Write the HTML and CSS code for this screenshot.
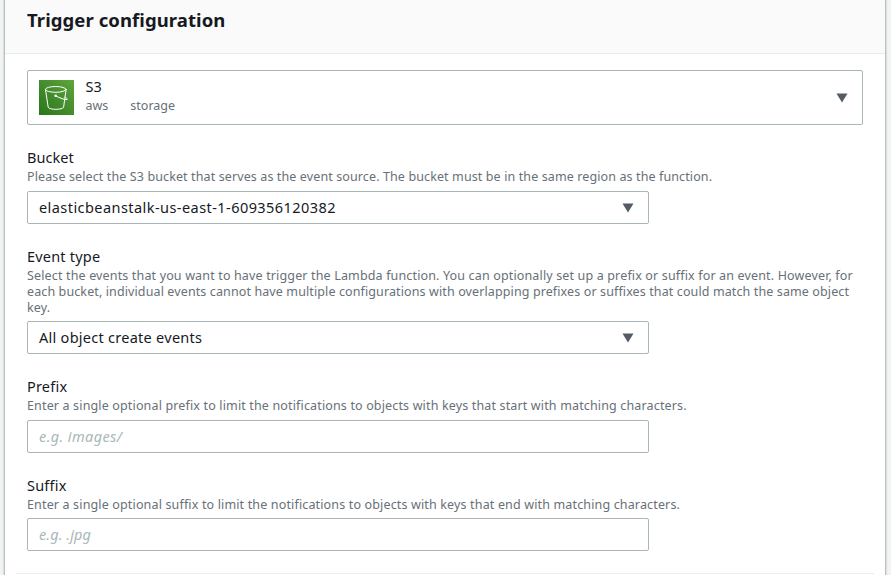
FILE: index.html
```html
<!DOCTYPE html>
<html lang="en">
<head>
<meta charset="utf-8">
<title>Trigger configuration</title>
<link rel="stylesheet" href="styles.css">
</head>
<body>
<main class="panel">
  <header class="panel-header"><h2>Trigger configuration</h2></header>
  <div class="panel-body">
    <div class="source">
      <svg class="source-icon" viewBox="0 0 35 35">
        <defs><linearGradient id="g" x1="0" y1="1" x2="1" y2="0"><stop offset="0" stop-color="#2a751d"/><stop offset="1" stop-color="#5fa53c"/></linearGradient></defs>
        <rect width="35" height="35" fill="url(#g)"/>
        <g fill="none" stroke="#fff" stroke-width="1" stroke-linejoin="round" stroke-linecap="round">
          <ellipse cx="16.8" cy="9.4" rx="10.3" ry="2.9"/>
          <path d="M6.5 9.6 9.2 27.2C9.8 30 24 30 24.6 27.2L27.1 9.6"/>
          <path d="M16.8 15.9C21 18.1 25.5 19.8 28 19.6C29 19.2 27.6 18 26 17.3"/>
        </g>
        <circle cx="16.7" cy="15.8" r="1.3" fill="#fff"/>
      </svg>
      <div class="source-text">
        <div class="source-name">S3</div>
        <div class="tags"><span>aws</span><span>storage</span></div>
      </div>
      <svg class="caret" viewBox="0 0 12 10"><path d="M.5.5h11L6 9.5z"/></svg>
    </div>

    <section class="field">
      <div class="label bucket-label">Bucket</div>
      <div class="help"><span class="bucket-help">Please select the S3 bucket that serves as the event source. The bucket must be in the same region as the function.</span></div>
      <div class="control"><span class="bucket-value">elasticbeanstalk-us-east-1-609356120382</span><svg class="caret" viewBox="0 0 12 10"><path d="M.5.5h11L6 9.5z"/></svg></div>
    </section>

    <section class="field event">
      <div class="label">Event type</div>
      <div class="help"><span class="event-help-1">Select the events that you want to have trigger the Lambda function. You can optionally set up a prefix or suffix for an event. However, for</span> <span class="event-help-2">each bucket, individual events cannot have multiple configurations with overlapping prefixes or suffixes that could match the same object</span> <span>key.</span></div>
      <div class="control"><span>All object create events</span><svg class="caret" viewBox="0 0 12 10"><path d="M.5.5h11L6 9.5z"/></svg></div>
    </section>

    <section class="field">
      <div class="label">Prefix</div>
      <div class="help"><span>Enter a single optional prefix to limit the notifications to objects with keys that start with matching characters.</span></div>
      <div class="control placeholder"><span class="prefix-value">e.g. images/</span></div>
    </section>

    <section class="field suffix">
      <div class="label">Suffix</div>
      <div class="help"><span>Enter a single optional suffix to limit the notifications to objects with keys that end with matching characters.</span></div>
      <div class="control placeholder"><span class="suffix-value">e.g. .jpg</span></div>
    </section>
  </div>
  <hr class="divider">
</main>
</body>
</html>
```
FILE: styles.css
```css
* { box-sizing: border-box; }
body {
  margin: 0;
  height: 575px;
  overflow: hidden;
  padding: 0 5px 0 4px;
  background: #f2f3f3;
  color: #16191f;
  font-family: "Noto Sans", "Open Sans", sans-serif;
  font-size: 14px;
}
.panel {
  height: 575px;
  background: #fff;
  border-left: 1px solid #b9c0c1;
  border-right: 1px solid #b9c0c1;
  box-shadow: 0 0 2px rgba(0, 28, 36, .25);
}
.panel-header {
  height: 54px;
  padding: 6px 22px 0;
  background: #fafafa;
  border-bottom: 1px solid #eaeded;
}
h2 { margin: 0; font-size: 18.5px; line-height: 28px; font-weight: 700; letter-spacing: .08px; }
.panel-body { padding: 16px 22px 0; }
.source {
  display: flex;
  align-items: center;
  height: 55px;
  padding: 0 14px 0 11px;
  border: 1px solid #aab7b8;
  border-radius: 2px;
}
.source-icon { width: 35px; height: 35px; flex: none; }
.source-text { flex: 1; margin-left: 11.5px; }
.source-name { font-size: 14.5px; line-height: 17px; margin-top: -3px; padding-bottom: 2px; }
.tags { display: flex; gap: 22px; font-size: 12.5px; line-height: 18px; color: #687078; }
.caret { width: 12px; height: 10px; flex: none; fill: #545b64; }
.field { margin-top: 23px; }
.label { padding-bottom: 2px; font-size: 14.5px; line-height: 18px; letter-spacing: .2px; }
.bucket-label { letter-spacing: .05px; }
.help {
  padding-top: 1px;
  margin-bottom: -1px;
  font-size: 12.5px;
  line-height: 16px;
  letter-spacing: .15px;
  color: #687078;
  white-space: nowrap;
}
.help span { display: block; }
.bucket-help, .event-help-2 { letter-spacing: .113px; }
.control {
  display: flex;
  align-items: center;
  justify-content: space-between;
  width: 622px;
  height: 33px;
  margin-top: 7px;
  padding: 0 14.5px 0 11px;
  border: 1px solid #aab7b8;
  border-radius: 2px;
  font-size: 14.5px;
  letter-spacing: .27px;
  white-space: nowrap;
}
.control span { padding-bottom: 2px; }
.bucket-value { letter-spacing: .44px; }
.event .control, .suffix .control { margin-top: 6px; }
.placeholder { color: #aab7b8; font-style: italic; }
.prefix-value { letter-spacing: .4px; }
.suffix-value { letter-spacing: .1px; }
.divider { margin: 22px 11px 0; border: 0; border-top: 1px solid #eaeded; }
```
